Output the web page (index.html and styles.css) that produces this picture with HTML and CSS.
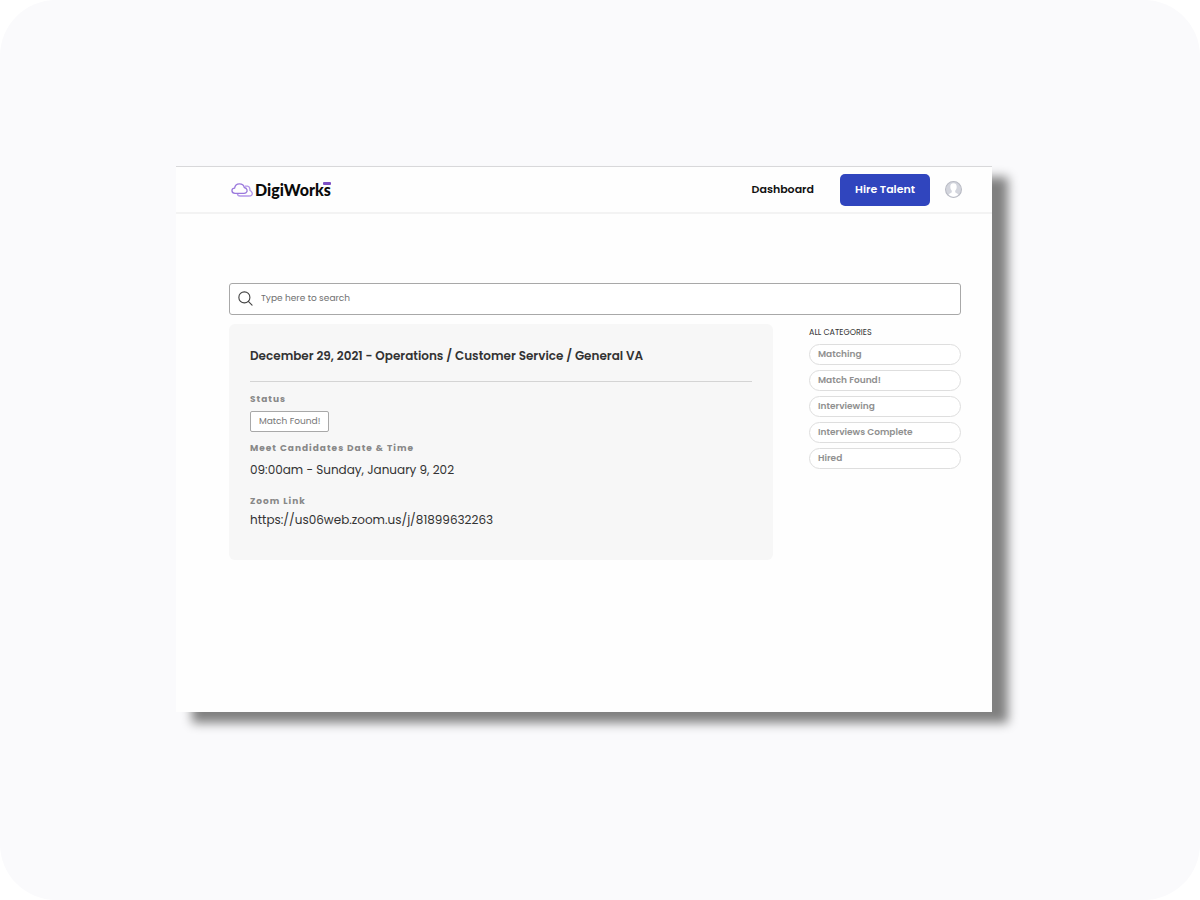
FILE: index.html
```html
<!DOCTYPE html>
<html lang="en">
<head>
<meta charset="utf-8">
<meta name="viewport" content="width=device-width, initial-scale=1">
<title>DigiWorks</title>
<link rel="stylesheet" href="styles.css">
</head>
<body>
<div class="stage">
  <div class="window">
    <header class="topbar">
      <a class="brand" href="#" aria-label="DigiWorks">
        <svg class="brand-cloud" viewBox="0 0 22 14" fill="none" stroke-width="1.3" stroke-linejoin="round" aria-hidden="true">
          <path stroke="#b498ea" d="M14 3.200H16.500C18.400 3.400 19 5.500 18.900 7.400C21.200 8.500 21.900 11 20.600 12.300C20 12.900 19 13 18 13H9C7.500 13 6.500 12 6.300 10.400"/>
          <path stroke="#9a78dc" d="M4 10.300C.2 10.300-.2 5.600 3.600 5.200C4 2 6 .8 8.400.8C11 .8 12.800 2.200 13.300 4.500C16.400 5.200 16.900 8.200 15 9.700C14.400 10.200 13.700 10.300 13 10.300Z"/>
        </svg>
        <span class="brand-name">DigiWorks<i class="brand-mark"></i></span>
      </a>
      <nav class="nav">
        <a class="nav-link" href="#">Dashboard</a>
        <button class="hire" type="button">Hire Talent</button>
        <button class="avatar" type="button" aria-label="Account">
          <svg viewBox="0 0 16 16" aria-hidden="true">
            <circle cx="8" cy="8" r="7.500" fill="#d3d5dd" stroke="#b9bbc4"/>
            <path fill="#fff" d="M8 2.200C5.800 2.200 4.900 3.700 5 5.700C5 7.300 5.700 8.500 6.400 9.200V10.700C5.700 11.500 4.400 11.700 3.500 12.700C5.800 15.400 10.200 15.400 12.500 12.700C11.600 11.700 10.300 11.500 9.600 10.700V9.200C10.300 8.500 11 7.300 11 5.700C11.100 3.700 10.200 2.200 8 2.200Z"/>
          </svg>
        </button>
      </nav>
    </header>
    <main class="content">
      <label class="search">
        <svg class="search-icon" viewBox="0 0 16 16" fill="none" stroke="#444" stroke-width="1.200" stroke-linecap="round" aria-hidden="true">
          <circle cx="6.800" cy="6.800" r="5.900"/>
          <path d="M11 11L15 15"/>
        </svg>
        <input class="search-input" type="text" placeholder="Type here to search" aria-label="Search">
      </label>
      <div class="columns">
        <article class="job">
          <h1 class="job-title">December 29, 2021 - Operations / Customer Service / General VA</h1>
          <h2 class="label">Status</h2>
          <span class="status">Match Found!</span>
          <h2 class="label">Meet Candidates Date &amp; Time</h2>
          <p class="value value-date">09:00am - Sunday, January 9, 202</p>
          <h2 class="label">Zoom Link</h2>
          <p class="value">https://us06web.zoom.us/j/81899632263</p>
        </article>
        <aside class="categories">
          <h2 class="categories-title">ALL CATEGORIES</h2>
          <div class="category-list">
            <button class="category" type="button">Matching</button>
            <button class="category" type="button">Match Found!</button>
            <button class="category" type="button">Interviewing</button>
            <button class="category" type="button">Interviews Complete</button>
            <button class="category" type="button">Hired</button>
          </div>
        </aside>
      </div>
    </main>
  </div>
</div>
</body>
</html>
```
FILE: styles.css
```css
* { box-sizing: border-box; }
body {
  margin: 0;
  background: #fff;
  color: #333;
  font-family: Poppins, Inter, "Open Sans", sans-serif;
}
h1, h2, p { margin: 0; }
button, input { font-family: inherit; }
button { cursor: pointer; }
a { color: inherit; text-decoration: none; }

.stage {
  display: flex;
  min-height: 100vh;
  padding: 166px 208px 188px 176px;
  border-radius: 56px;
  background: #fafafc;
}
.window {
  flex: 1;
  min-width: 0;
  border-top: 1px solid #d8d8da;
  background: #fefefe;
  box-shadow: 16px 11px 10px #808080;
}

.topbar {
  display: flex;
  align-items: center;
  justify-content: space-between;
  height: 47px;
  padding: 0 30px 0 55px;
  border-bottom: 2px solid #f3f3f3;
}
.brand { display: flex; align-items: center; gap: 2px; }
.brand-cloud { width: 22px; height: 14px; }
.brand-name {
  position: relative;
  color: #0a0a0a;
  font-family: Lato, sans-serif;
  font-size: 16px;
  font-weight: 900;
  line-height: 20px;
}
.brand-mark {
  position: absolute;
  top: 2px;
  right: 0;
  width: 8px;
  height: 3px;
  border-radius: 1px;
  background: #7d4fc4;
}
.nav { display: flex; align-items: center; }
.nav-link { margin-right: 26px; color: #111; font-size: 11px; font-weight: 600; }
.hire {
  width: 90px;
  height: 32px;
  margin-right: 15px;
  padding: 0;
  border: 0;
  border-radius: 5px;
  background: #3045be;
  color: #fff;
  font-size: 11px;
  font-weight: 600;
}
.avatar {
  display: flex;
  width: 17px;
  height: 17px;
  padding: 0;
  border: 0;
  background: none;
}
.avatar svg { width: 100%; height: 100%; }

.content { padding: 69px 31px 40px 53px; }
.search {
  display: flex;
  align-items: center;
  gap: 8px;
  height: 32px;
  padding: 0 8px 1px;
  border: 1px solid #a8a8a8;
  border-radius: 3px;
  background: #fff;
}
.search-icon { width: 15px; height: 15px; }
.search-input {
  flex: 1;
  min-width: 0;
  padding: 0;
  border: 0;
  outline: 0;
  background: none;
  color: #333;
  font-size: 9px;
}
.search-input::placeholder { color: #707070; opacity: 1; }

.columns { display: flex; align-items: flex-start; gap: 36px; margin-top: 9px; }
.job {
  flex: 1;
  min-width: 0;
  padding: 22px 21px 29px;
  border-radius: 6px;
  background: #f7f7f7;
}
.job-title {
  margin-bottom: 9px;
  padding-bottom: 15px;
  border-bottom: 1px solid #d4d4d4;
  font-size: 12px;
  font-weight: 600;
  line-height: 20px;
}
.label {
  color: #888;
  font-size: 9px;
  font-weight: 700;
  letter-spacing: 1px;
  line-height: 16px;
}
.status {
  display: inline-block;
  margin: 4px 0 8px;
  padding: 0 8px;
  border: 1px solid #a8a8a8;
  border-radius: 2px;
  background: #fff;
  color: #777;
  font-size: 9px;
  line-height: 19px;
  vertical-align: top;
}
.value { font-size: 12px; line-height: 22px; }
.value-date { margin: 3px 0 12px; }

.categories { width: 152px; }
.categories-title {
  margin-bottom: 2px;
  color: #333;
  font-size: 8px;
  font-weight: 400;
  line-height: 18px;
}
.category-list { display: flex; flex-direction: column; gap: 5px; }
.category {
  height: 21px;
  padding: 0 8px;
  border: 1px solid #dedede;
  border-radius: 11px;
  background: #fff;
  color: #909090;
  font-size: 9px;
  font-weight: 600;
  text-align: left;
}
```
